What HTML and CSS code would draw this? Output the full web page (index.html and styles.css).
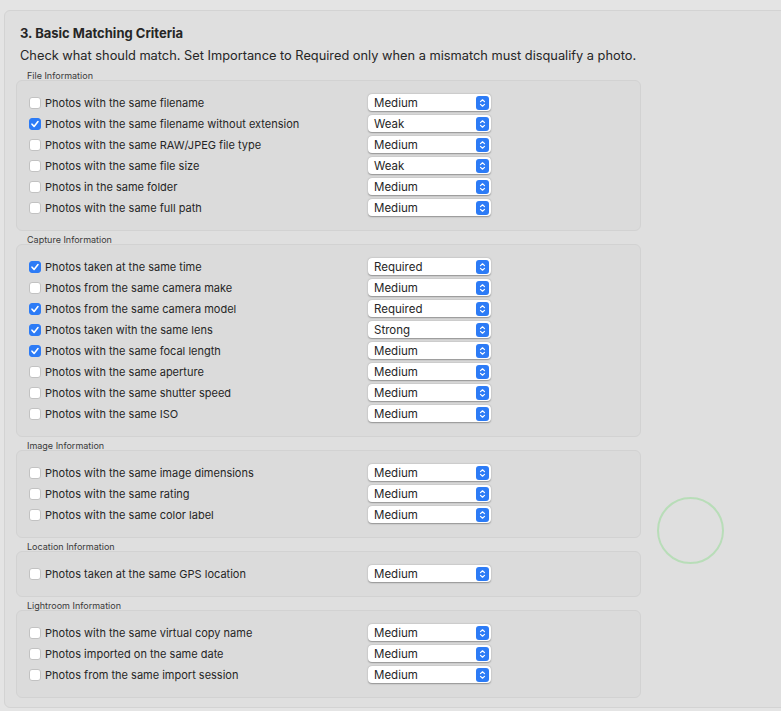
FILE: index.html
```html
<!DOCTYPE html>
<html lang="en">
<head>
    <meta charset="UTF-8">
    <meta name="viewport" content="width=device-width, initial-scale=1.0">
    <title>Basic Matching Criteria</title>
    <link rel="stylesheet" href="styles.css">
</head>
<body>
  <div class="panel">
    <h2 class="title">3. Basic Matching Criteria</h2>
    <p class="intro">Check what should match. Set Importance to Required only when a mismatch must disqualify a photo.</p>

    <div class="group-label first">File Information</div>
    <div class="group">
      <div class="row"><span class="check"></span><span class="row-text">Photos with the same filename</span><span class="popup">Medium<i class="stepper"></i></span></div>
      <div class="row"><span class="check on"></span><span class="row-text">Photos with the same filename without extension</span><span class="popup">Weak<i class="stepper"></i></span></div>
      <div class="row"><span class="check"></span><span class="row-text">Photos with the same RAW/JPEG file type</span><span class="popup">Medium<i class="stepper"></i></span></div>
      <div class="row"><span class="check"></span><span class="row-text">Photos with the same file size</span><span class="popup">Weak<i class="stepper"></i></span></div>
      <div class="row"><span class="check"></span><span class="row-text">Photos in the same folder</span><span class="popup">Medium<i class="stepper"></i></span></div>
      <div class="row"><span class="check"></span><span class="row-text">Photos with the same full path</span><span class="popup">Medium<i class="stepper"></i></span></div>
    </div>

    <div class="group-label">Capture Information</div>
    <div class="group">
      <div class="row"><span class="check on"></span><span class="row-text">Photos taken at the same time</span><span class="popup">Required<i class="stepper"></i></span></div>
      <div class="row"><span class="check"></span><span class="row-text">Photos from the same camera make</span><span class="popup">Medium<i class="stepper"></i></span></div>
      <div class="row"><span class="check on"></span><span class="row-text">Photos from the same camera model</span><span class="popup">Required<i class="stepper"></i></span></div>
      <div class="row"><span class="check on"></span><span class="row-text">Photos taken with the same lens</span><span class="popup">Strong<i class="stepper"></i></span></div>
      <div class="row"><span class="check on"></span><span class="row-text">Photos with the same focal length</span><span class="popup">Medium<i class="stepper"></i></span></div>
      <div class="row"><span class="check"></span><span class="row-text">Photos with the same aperture</span><span class="popup">Medium<i class="stepper"></i></span></div>
      <div class="row"><span class="check"></span><span class="row-text">Photos with the same shutter speed</span><span class="popup">Medium<i class="stepper"></i></span></div>
      <div class="row"><span class="check"></span><span class="row-text">Photos with the same ISO</span><span class="popup">Medium<i class="stepper"></i></span></div>
    </div>

    <div class="group-label">Image Information</div>
    <div class="group">
      <div class="row"><span class="check"></span><span class="row-text">Photos with the same image dimensions</span><span class="popup">Medium<i class="stepper"></i></span></div>
      <div class="row"><span class="check"></span><span class="row-text">Photos with the same rating</span><span class="popup">Medium<i class="stepper"></i></span></div>
      <div class="row"><span class="check"></span><span class="row-text">Photos with the same color label</span><span class="popup">Medium<i class="stepper"></i></span></div>
    </div>

    <div class="group-label">Location Information</div>
    <div class="group">
      <div class="row"><span class="check"></span><span class="row-text">Photos taken at the same GPS location</span><span class="popup">Medium<i class="stepper"></i></span></div>
    </div>

    <div class="group-label">Lightroom Information</div>
    <div class="group">
      <div class="row"><span class="check"></span><span class="row-text">Photos with the same virtual copy name</span><span class="popup">Medium<i class="stepper"></i></span></div>
      <div class="row"><span class="check"></span><span class="row-text">Photos imported on the same date</span><span class="popup">Medium<i class="stepper"></i></span></div>
      <div class="row"><span class="check"></span><span class="row-text">Photos from the same import session</span><span class="popup">Medium<i class="stepper"></i></span></div>
    </div>
  </div>

  <div class="spinner"></div>
</body>
</html>
```

FILE: styles.css
```css
* {
box-sizing: border-box;
}

body {
margin: 0;
background-color: #e4e4e4;
color: #262626;
font-family: Inter, "Noto Sans", sans-serif;
overflow: hidden;
}

.panel {
margin: 10px -20px 0 4px;
padding: 14px 0 9px 11px;
background-color: #dfdfdf;
border: 1px solid #d3d3d3;
border-radius: 6px;
}

.title {
margin: 0 0 0 4px;
font-size: 13px;
font-weight: 700;
line-height: 16px;
}

.intro {
margin: 7px 0 0 4px;
font-size: 12.8px;
line-height: 16px;
}

.group-label {
padding: 4px 0 0 11px;
font-size: 9px;
line-height: 9px;
color: #3a3a3a;
}

.group-label.first {
margin-top: 3px;
}

.group {
width: 625px;
padding: 11px 0 12px 12px;
background-color: #dbdbdb;
border: 1px solid #d2d2d2;
border-radius: 6px;
}

.row {
display: flex;
align-items: center;
height: 21px;
font-size: 11px;
}

.check {
width: 12px;
height: 12px;
flex-shrink: 0;
background-color: #fff;
border: 1px solid #c2c2c2;
border-radius: 3px;
}

.check.on {
background-color: #2c7bf6;
border-color: #2c7bf6;
background-image: url("data:image/svg+xml,%3Csvg xmlns='http://www.w3.org/2000/svg' viewBox='0 0 10 10'%3E%3Cpath d='M2 5.2 4.1 7.4 8 2.6' fill='none' stroke='white' stroke-width='1.6' stroke-linecap='round' stroke-linejoin='round'/%3E%3C/svg%3E");
background-size: 10px 10px;
background-position: center;
}

.row-text {
width: 323px;
margin-left: 4px;
white-space: nowrap;
}

.popup {
display: flex;
align-items: center;
justify-content: space-between;
width: 123px;
height: 17px;
padding: 0 2px 0 6px;
background-color: #fff;
border-radius: 4px;
box-shadow: 0 0.5px 1.5px rgba(0, 0, 0, 0.35);
font-size: 11.5px;
}

.stepper {
width: 13px;
height: 14px;
background-color: #2c7bf6;
border-radius: 3px;
background-image: url("data:image/svg+xml,%3Csvg xmlns='http://www.w3.org/2000/svg' viewBox='0 0 13 14'%3E%3Cpath d='M4.5 5.6 6.5 3.8 8.5 5.6M4.5 8.4 6.5 10.2 8.5 8.4' fill='none' stroke='white' stroke-width='1.2' stroke-linecap='round' stroke-linejoin='round'/%3E%3C/svg%3E");
}

.spinner {
position: absolute;
left: 657px;
top: 497px;
width: 67px;
height: 67px;
border: 2px solid #b8ddb8;
border-radius: 50%;
}
```
